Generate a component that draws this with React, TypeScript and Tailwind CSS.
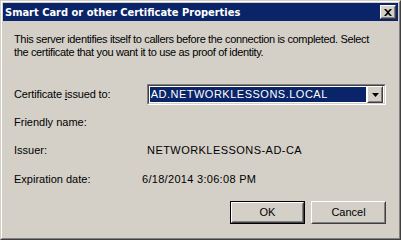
const raised =
  'border border-t-white border-l-white border-r-[#404040] border-b-[#404040]'
const raisedInner = 'border border-t-[#d4d0c8] border-l-[#d4d0c8] border-r-[#808080] border-b-[#808080]'

const Button = ({ label, isDefault }: { label: string; isDefault?: boolean }) => {
  const inner = (
    <div className={`${raised} h-full w-full`}>
      <div className={`${raisedInner} flex h-full w-full items-center justify-center`}>{label}</div>
    </div>
  )
  return (
    <div className={`h-[23px] w-[75px] ${isDefault ? 'border border-black' : ''}`}>{inner}</div>
  )
}

const App = () => {
  return (
    <div
      className="w-[401px] h-[240px] bg-[#d4d0c8] text-[11px] leading-[13px] text-black"
      style={{ fontFamily: '"Liberation Sans", Arial, sans-serif' }}
    >
      {/* Window frame */}
      <div className="h-full w-full border border-t-[#d4d0c8] border-l-[#d4d0c8] border-r-[#404040] border-b-[#404040]">
        <div className="h-full w-full border border-t-white border-l-white border-r-[#808080] border-b-[#808080] p-px flex flex-col">
          {/* Title bar */}
          <div className="h-[18px] bg-[#0a246a] flex items-center justify-between pl-[2px] pr-[2px]">
            <span
              className="text-white font-bold text-[11px]"
              style={{ fontFamily: '"DejaVu Sans Condensed", "DejaVu Sans", sans-serif' }}
            >
              Smart Card or other Certificate Properties
            </span>
            <div className={`${raised} h-[14px] w-[16px] bg-[#d4d0c8]`}>
              <div className={`${raisedInner} flex h-full w-full items-center justify-center`}>
                <svg width="8" height="7" viewBox="0 0 8 7">
                  <path d="M0 0h2l2 2 2-2h2L5 3.5 8 7H6L4 5 2 7H0l3-3.5z" fill="black" />
                </svg>
              </div>
            </div>
          </div>

          {/* Body */}
          <div className="flex-1 pl-[11px] pr-[12px] pt-[12px] flex flex-col">
            <p className="whitespace-nowrap tracking-[-0.35px]">
              This server identifies itself to callers before the connection is completed. Select
              <br />
              the certificate that you want it to use as proof of identity.
            </p>

            <div className="mt-[25px] flex items-center h-[21px]">
              <div className="w-[133px] tracking-[-0.15px]">
                Certificate <span className="underline">i</span>ssued to:
              </div>
              <div className="w-[240px] h-[21px] border border-t-[#808080] border-l-[#808080] border-r-white border-b-white">
                <div className="h-full w-full border border-t-[#404040] border-l-[#404040] border-r-[#d4d0c8] border-b-[#d4d0c8] bg-white flex items-center pl-px pr-px">
                  <div className="flex-1 h-[15px] bg-[#0a246a] text-white flex items-center px-[1px] tracking-[0.5px]">
                    AD.NETWORKLESSONS.LOCAL
                  </div>
                  <div className={`${raised} h-[17px] w-[16px] bg-[#d4d0c8] ml-px`}>
                    <div className={`${raisedInner} flex h-full w-full items-center justify-center`}>
                      <svg width="7" height="4" viewBox="0 0 7 4">
                        <path d="M0 0h7L3.5 4z" fill="black" />
                      </svg>
                    </div>
                  </div>
                </div>
              </div>
            </div>

            <div className="mt-[11px] flex">
              <div className="w-[133px]">Friendly name:</div>
              <div></div>
            </div>

            <div className="mt-[15px] flex">
              <div className="w-[133px]">Issuer:</div>
              <div className="tracking-[0.45px]">NETWORKLESSONS-AD-CA</div>
            </div>

            <div className="mt-[16px] flex">
              <div className="w-[128px]">Expiration date:</div>
              <div className="tracking-[0.3px]">6/18/2014 3:06:08 PM</div>
            </div>

            <div className="mt-[15px] flex justify-end gap-[6px]">
              <Button label="OK" isDefault />
              <Button label="Cancel" />
            </div>
          </div>
        </div>
      </div>
    </div>
  )
}

export default App
